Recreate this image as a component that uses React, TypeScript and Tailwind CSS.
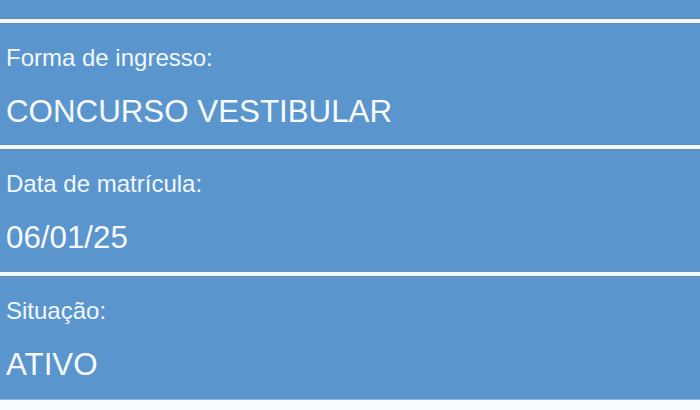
const rows = [
  { label: "Forma de ingresso:", value: "CONCURSO VESTIBULAR", h: "h-[120px]" },
  { label: "Data de matrícula:", value: "06/01/25", h: "h-[121px]" },
  { label: "Situação:", value: "ATIVO", h: "h-[122px]" },
];

function Divider() {
  return (
    <div className="h-[6px] bg-[#eef9ff] border-y border-[#6c8caf]" />
  );
}

function InfoRow({ label, value, h }: { label: string; value: string; h: string }) {
  return (
    <div className={`${h} bg-[#5a95ce] pl-[6px] pt-[20px]`}>
      <p className="text-[24px] leading-[28px] text-[#f2f8ff]">{label}</p>
      <p className="mt-[22px] text-[31.3px] leading-[36px] text-[#f7fbff]">
        {value}
      </p>
    </div>
  );
}

export default function App() {
  return (
    <div
      className="w-[700px] h-[410px] overflow-hidden bg-[#f8fcff] flex flex-col"
      style={{ fontFamily: '"Liberation Sans", Arial, sans-serif' }}
    >
      <div className="h-[18px] shrink-0 bg-[#5a95ce]" />
      {rows.map((r) => (
        <div key={r.label} className="shrink-0">
          <Divider />
          <InfoRow label={r.label} value={r.value} h={r.h} />
        </div>
      ))}
      <div className="h-[1px] shrink-0 bg-[#8fb4d8]" />
    </div>
  );
}
